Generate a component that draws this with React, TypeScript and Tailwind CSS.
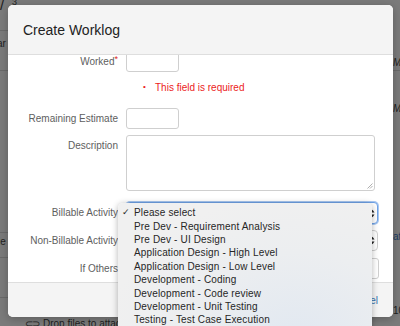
import React from "react";

// Options shown in the open native select popup
const BILLABLE_OPTIONS = [
  "Please select",
  "Pre Dev - Requirement Analysis",
  "Pre Dev - UI Design",
  "Application Design - High Level",
  "Application Design - Low Level",
  "Development - Coding",
  "Development - Code review",
  "Development - Unit Testing",
  "Testing - Test Case Execution",
];

function SelectArrows() {
  return (
    <svg width="5" height="9" viewBox="0 0 5 9" className="shrink-0">
      <path d="M0.5 3.5 L2.5 0.8 L4.5 3.5 Z" fill="#222" />
      <path d="M0.5 5.5 L2.5 8.2 L4.5 5.5 Z" fill="#222" />
    </svg>
  );
}

function FormRow({
  label,
  required,
  className,
  children,
}: {
  label: string;
  required?: boolean;
  className?: string;
  children: React.ReactNode;
}) {
  return (
    <div className={`flex gap-[8px] ${className ?? ""}`}>
      <div className="w-[110px] shrink-0 text-right text-[10px] leading-[21px] text-[#5e5e5e]">
        {label}
        {required && <span className="text-[#e0261b] text-[9px] align-top relative top-[-2px]">*</span>}
      </div>
      {children}
    </div>
  );
}

export default function App() {
  return (
    <div className="relative w-[400px] h-[326px] overflow-hidden bg-[#7b7b7b] font-['Liberation_Sans',Arial,sans-serif]">
      {/* Dimmed page behind the dialog */}
      <div className="absolute left-0 top-[-6px] text-[15px] text-[#1e1e1e]">/</div>
      <div className="absolute left-[12px] top-[-4px] text-[9px] text-[#1e1e1e]">3</div>
      <div className="absolute left-0 top-[30px] w-[8px] h-px bg-[#6a6a6a]" />
      <div className="absolute left-[-3px] top-[36px] text-[10px] text-[#1e1e1e]">ar</div>
      <div className="absolute left-0 top-[70px] w-[8px] h-px bg-[#6a6a6a]" />
      <div className="absolute left-0 top-[232px] w-[8px] h-px bg-[#6a6a6a]" />
      <div className="absolute left-[-2px] top-[234px] text-[10px] text-[#1e1e1e]">ie</div>
      <div className="absolute left-0 top-[257px] w-[8px] h-px bg-[#6a6a6a]" />
      <div className="absolute left-0 top-[297px] w-[8px] h-px bg-[#6a6a6a]" />
      <div className="absolute left-[393px] top-[70px] w-[7px] h-px bg-[#6a6a6a]" />
      <div className="absolute left-[393px] top-[55px] text-[10px] italic text-[#1e1e1e]">Me</div>
      <div className="absolute left-[393px] top-[101px] text-[10px] italic text-[#1e1e1e]">Me</div>
      <div className="absolute left-[393px] top-[229px] text-[10px] text-[#1d3d63]">at</div>
      <div className="absolute left-[393px] top-[303px] text-[10px] text-[#1e1e1e]">10</div>
      <div className="absolute left-[25px] top-[316px] flex items-center gap-[4px] text-[10px] text-[#1e1e1e]">
        <span className="tracking-[-1px]">⊂⊃</span>
        <span>Drop files to attach</span>
      </div>

      {/* Dialog */}
      <div className="absolute left-[8px] top-[5px] w-[385px] h-[312px] rounded-[5px] bg-white shadow-[0_2px_10px_rgba(0,0,0,0.25)] overflow-hidden flex flex-col">
        <div className="h-[50px] shrink-0 bg-[#f4f4f4] border-b border-[#dedede] px-[15px] flex items-center">
          <h2 className="text-[14px] leading-[20px] text-[#222] pt-[1px]">Create Worklog</h2>
        </div>

        <div className="flex-1 overflow-hidden">
          <div className="-mt-[4px] flex flex-col">
            <FormRow label="Worked" required>
              <div className="w-[53px] h-[21px] border border-[#cfcfcf] rounded-[3px] bg-white" />
            </FormRow>

            <div className="mt-[8px] ml-[135px] flex items-center h-[14px] text-[10px] text-[#ec1c1c]">
              <span className="w-[12px] text-[8px]">•</span>
              <span>This field is required</span>
            </div>

            <FormRow label="Remaining Estimate" className="mt-[14px]">
              <div className="w-[53px] h-[21px] border border-[#cfcfcf] rounded-[3px] bg-white" />
            </FormRow>

            <FormRow label="Description" className="mt-[6px]">
              <div className="relative w-[249px] h-[56px] border border-[#cfcfcf] rounded-[3px] bg-white">
                <svg width="6" height="6" viewBox="0 0 6 6" className="absolute right-[1px] bottom-[1px]">
                  <path d="M5.5 0.5 L0.5 5.5 M5.5 3 L3 5.5" stroke="#9a9a9a" strokeWidth="0.8" />
                </svg>
              </div>
            </FormRow>

            <FormRow label="Billable Activity" className="mt-[11px]">
              <div className="w-[252px] h-[22px] border border-[#6fa2e6] rounded-[4px] bg-white shadow-[0_0_0_1px_#a9c8f2] flex items-center justify-end pr-[2px]">
                <SelectArrows />
              </div>
            </FormRow>

            <FormRow label="Non-Billable Activity" className="mt-[6px]">
              <div className="w-[252px] h-[21px] border border-[#cfcfcf] rounded-[4px] bg-white flex items-center justify-end pr-[2px]">
                <SelectArrows />
              </div>
            </FormRow>

            <FormRow label="If Others" className="mt-[7px]">
              <div className="w-[253px] h-[21px] border border-[#cfcfcf] rounded-[3px] bg-white" />
            </FormRow>
          </div>
        </div>

        <div className="h-[35px] shrink-0 bg-[#f4f4f4] border-t border-[#dedede] flex items-center justify-end pr-[15px]">
          <span className="text-[10px] text-[#3572b0]">Cancel</span>
        </div>
      </div>

      {/* Open native select popup */}
      <div className="absolute left-[118px] top-[203px] w-[254px] h-[130px] rounded-t-[5px] bg-[radial-gradient(ellipse_at_70%_105%,#e1e8f1_0%,#eceef0_45%,#f0f0f0_75%)] shadow-[0_1px_6px_rgba(0,0,0,0.3)] pt-[3px] text-[10px] text-[#262626] tracking-[0.15px]">
        {BILLABLE_OPTIONS.map((opt, i) => (
          <div key={opt} className="flex items-center h-[13.4px]">
            <span className="w-[16px] pl-[4px] text-[9px]">{i === 0 ? "✓" : ""}</span>
            <span>{opt}</span>
          </div>
        ))}
      </div>
    </div>
  );
}
